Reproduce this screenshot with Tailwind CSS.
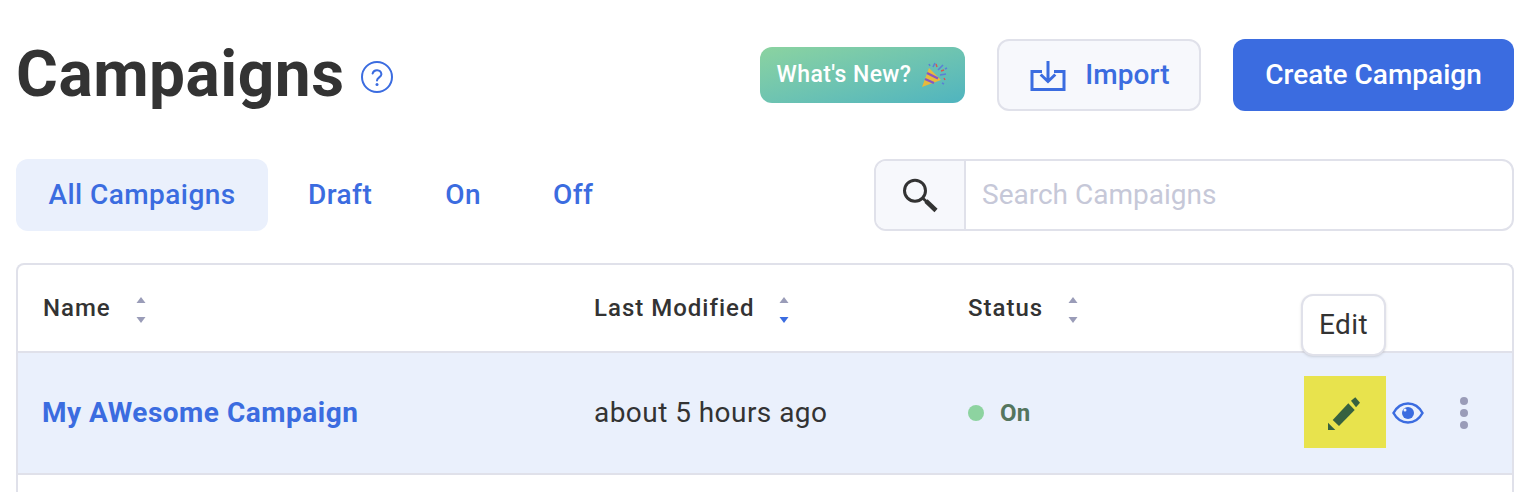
<!DOCTYPE html>
<html lang="en">
<head>
    <meta charset="UTF-8">
    <meta name="viewport" content="width=device-width, initial-scale=1.0">
    <title>Campaigns</title>
    <script src="https://cdn.jsdelivr.net/npm/@tailwindcss/browser@4"></script>
</head>
<body class="bg-white text-[#333333] font-['Roboto',sans-serif] h-[492px] overflow-hidden">
    <div class="px-4 pt-[39px]">
        <!-- Header -->
        <div class="flex items-center justify-between h-[72px]">
            <div class="flex items-center">
                <h1 class="text-[64px] leading-[72px] font-bold tracking-[0.5px]">Campaigns</h1>
                <svg class="ml-[15px] mt-[4px] w-[34px] h-[34px] text-[#3b6ce0]" viewBox="0 0 34 34" fill="none" stroke="currentColor" stroke-width="2">
                    <circle cx="17" cy="17" r="15"/>
                    <path d="M12.6 13.6a4.5 4.5 0 0 1 8.8 .6c0 3-4.4 3.4-4.4 6.4" stroke-linecap="round"/>
                    <circle cx="17" cy="24.6" r="1.5" fill="currentColor" stroke="none"/>
                </svg>
            </div>
            <div class="flex items-center gap-8">
                <button class="h-14 w-[205px] rounded-xl bg-gradient-to-br from-[#8bd3a0] to-[#4fb4bf] text-white text-[23px] font-medium tracking-[0.4px] flex items-center justify-center gap-[9px]">
                    <span>What's New?</span>
                    <svg class="w-7 h-7" viewBox="0 0 28 28">
                        <path d="M2 26 L9 7 L21 19 Z" fill="#e8b93c"/>
                        <path d="M5 18 L14 22 M7 12 L18 17.500" stroke="#8a55c0" stroke-width="2.4"/>
                        <path d="M13 6 l2 -4 M18 9 l5 -5 M20 14 l6 -1 M22 22 l2 1 M9 3 l1 2 M25 8 l2 -1" stroke="#5b7fd6" stroke-width="1.6"/>
                        <path d="M16 3 l1 3 M21 10 l3 -1 M24 17 l1 2" stroke="#d9534f" stroke-width="1.4"/>
                    </svg>
                </button>
                <button class="h-[72px] w-[204px] pl-[2px] rounded-xl border-2 border-[#e0e1ea] bg-[#f7f8fc] text-[#3b6ce0] text-[28px] font-medium tracking-[0.1px] flex items-center justify-center gap-[19px]">
                    <svg class="w-9 h-9" viewBox="0 0 36 36" fill="none" stroke="currentColor" stroke-width="3">
                        <path d="M12 14.500H2V32.500H34V14.500H24"/>
                        <path d="M18 4V24M10.700 17.500L18 24.500L25.300 17.500"/>
                    </svg>
                    Import
                </button>
                <button class="h-[72px] w-[281px] rounded-xl bg-[#3b6ce0] text-white text-[28px] font-medium">Create Campaign</button>
            </div>
        </div>

        <!-- Tabs and search -->
        <div class="flex items-center justify-between mt-12 h-[72px]">
            <div class="flex items-center text-[28px] font-medium tracking-[0.45px] text-[#3b6ce0]">
                <a class="h-[72px] w-[252px] rounded-xl bg-[#eaf0fc] flex items-center justify-center">All Campaigns</a>
                <a class="ml-10">Draft</a>
                <a class="ml-[73px]">On</a>
                <a class="ml-[72px]">Off</a>
            </div>
            <div class="flex h-[72px] w-[640px] rounded-xl border-2 border-[#e0e1ea] overflow-hidden">
                <div class="w-[90px] bg-[#f7f8fc] border-r-2 border-[#e0e1ea] flex items-center justify-center">
                    <svg class="w-9 h-9 text-[#333333]" viewBox="0 0 36 36" fill="none" stroke="currentColor">
                        <circle cx="13" cy="13.700" r="10.500" stroke-width="3"/>
                        <path d="M20.500 21L25 25" stroke-width="3"/>
                        <path d="M24 24L34 33.500" stroke-width="4.500"/>
                    </svg>
                </div>
                <div class="flex-1 flex items-center pl-4 text-[28px] text-[#c6c8d8]">Search Campaigns</div>
            </div>
        </div>

        <!-- Table -->
        <div class="relative mt-8 h-[229px] rounded-t-lg border-x-2 border-t-2 border-[#e0e1ea]">
            <div class="grid grid-cols-[551px_374px_1fr] h-[88px] pl-[25px] items-center text-[24px] font-medium tracking-[1px] border-b-2 border-[#e0e1ea]">
                <div class="flex items-center gap-[25px]">
                    Name
                    <svg class="mt-1 w-[10px] h-[26px] text-[#9a9cb8]" viewBox="0 0 10 26" fill="currentColor">
                        <path d="M5 0L9.500 6H.5Z"/><path d="M5 26L.5 20H9.500Z"/>
                    </svg>
                </div>
                <div class="flex items-center gap-[25px]">
                    Last Modified
                    <svg class="mt-1 w-[10px] h-[26px] text-[#9a9cb8]" viewBox="0 0 10 26" fill="currentColor">
                        <path d="M5 0L9.500 6H.5Z"/><path d="M5 26L.5 20H9.500Z" fill="#3b6ce0"/>
                    </svg>
                </div>
                <div class="flex items-center gap-[25px]">
                    Status
                    <svg class="mt-1 w-[10px] h-[26px] text-[#9a9cb8]" viewBox="0 0 10 26" fill="currentColor">
                        <path d="M5 0L9.500 6H.5Z"/><path d="M5 26L.5 20H9.500Z"/>
                    </svg>
                </div>
            </div>
            <div class="grid grid-cols-[551px_374px_1fr] h-[122px] pl-[25px] items-center bg-[#eaf0fc] border-b-2 border-[#e0e1ea]">
                <div class="-ml-px text-[28px] font-bold tracking-[0.5px] text-[#3b6ce0]">My AWesome Campaign</div>
                <div class="text-[28px] tracking-[0.45px]">about 5 hours ago</div>
                <div class="flex items-center justify-between">
                    <div class="flex items-center gap-4">
                        <span class="w-4 h-4 rounded-full bg-[#8dd3a0]"></span>
                        <span class="text-[24px] font-bold tracking-[0.3px] text-[#54755e]">On</span>
                    </div>
                    <div class="flex items-center pr-[44px]">
                        <div class="-mt-[2px] w-[82px] h-[72px] bg-[#e8e34d] flex items-center justify-center">
                            <svg class="w-10 h-10" viewBox="0 0 40 40" fill="#366140">
                                <path d="M7.700 28L23.300 11.300L29.700 18L14 34Z"/>
                                <path d="M26 8.700L30.300 5.300L35 10.700L31 15.300Z"/>
                                <path d="M3 30.700L10.300 38H3Z"/>
                            </svg>
                        </div>
                        <svg class="ml-[6px] w-8 h-[22px] text-[#3b6ce0]" viewBox="0 0 32 22" fill="none" stroke="currentColor" stroke-width="2.500">
                            <path d="M1.500 11C5 4.500 10 1.500 16 1.500S27 4.500 30.500 11C27 17.500 22 20.500 16 20.500S5 17.500 1.500 11Z"/>
                            <circle cx="16" cy="11" r="6" fill="currentColor" stroke="none"/>
                            <circle cx="13" cy="8" r="1.500" fill="#eaf0fc" stroke="none"/>
                        </svg>
                        <div class="ml-9 flex flex-col gap-[4px]">
                            <span class="w-2 h-2 rounded-full bg-[#9a9cb8]"></span>
                            <span class="w-2 h-2 rounded-full bg-[#9a9cb8]"></span>
                            <span class="w-2 h-2 rounded-full bg-[#9a9cb8]"></span>
                        </div>
                    </div>
                </div>
            </div>
            <!-- Tooltip over the edit icon -->
            <div class="absolute right-[126px] top-[29px] w-[85px] h-[62px] rounded-xl bg-white border-2 border-[#e0e1ea] shadow-sm flex items-center justify-center text-[28px] tracking-[0.4px]">Edit</div>
        </div>
    </div>
</body>
</html>
